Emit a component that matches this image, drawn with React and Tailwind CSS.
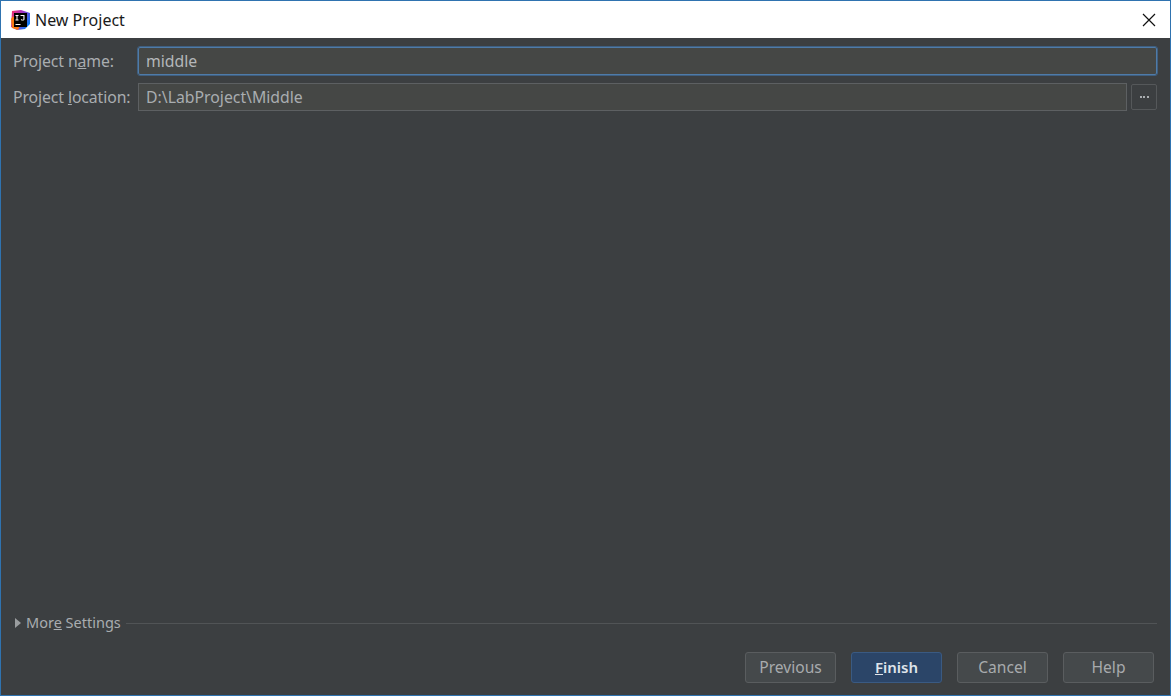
import React from 'react';

const FONT = "font-['Noto_Sans','Open_Sans',sans-serif]";

const AppIcon = () => (
  <svg width="20" height="20" viewBox="0 0 20 20">
    <defs>
      <linearGradient id="ij" x1="0" y1="0" x2="1" y2="0.6">
        <stop offset="0" stopColor="#fe315d" />
        <stop offset="0.5" stopColor="#a032c8" />
        <stop offset="1" stopColor="#087cfa" />
      </linearGradient>
    </defs>
    <path d="M2 1 L11 0 L20 3 L20 14 L15 19 L7 20 L1 17 Z" fill="url(#ij)" />
    <path d="M1 9 L2 18 L8 20 L10 16 L3 6 Z" fill="#f97a12" />
    <rect x="4" y="3" width="13" height="14" fill="#000" />
    <rect x="5.5" y="14" width="5" height="1" fill="#fff" />
    <path d="M5.5 5 h3 v.9 h-1 v3.6 h1 v.9 h-3 v-.9 h1 v-3.6 h-1 Z" fill="#fff" />
    <path d="M10.5 5 h4 v4 c0 1.1 -.7 1.6 -1.9 1.6 c-.8 0 -1.4 -.3 -1.8 -.9 l.7 -.6 c.3 .4 .6 .6 1 .6 c.5 0 .9 -.2 .9 -.8 v-3 h-2.9 Z" fill="#fff" />
  </svg>
);

const Btn = ({ children, primary }) => (
  <button
    className={`w-[91px] h-[31px] rounded-[3px] border leading-none ${
      primary
        ? 'bg-[#2b4568] border-[#3a5a82] text-[#dfe4ea] font-semibold text-[15px]'
        : 'bg-[#45494b] border-[#5a5d5f] text-[#a8abad] text-[15.6px]'
    }`}
  >
    {children}
  </button>
);

const Label = ({ children }) => (
  <span className="w-[125px] shrink-0 pt-[2px] text-[15.8px] tracking-[-0.1px] text-[#a9adb0] whitespace-nowrap">{children}</span>
);

export default function App() {
  return (
    <div className={`w-[1171px] h-[696px] flex flex-col bg-[#3c3f41] border border-[#2f73b0] ${FONT}`}>
      {/* title bar */}
      <div className="h-[37px] shrink-0 bg-white flex items-center pl-[9px] pr-[14px]">
        <AppIcon />
        <span className="ml-[5px] text-[16px] text-[#1a1a1a]">New Project</span>
        <svg className="ml-auto" width="14" height="14" viewBox="0 0 14 14">
          <path d="M1 1 L13 13 M13 1 L1 13" stroke="#111" strokeWidth="1.2" fill="none" />
        </svg>
      </div>

      <div className="flex-1 flex flex-col pl-[12px] pr-[13px]">
        <div className="flex items-center mt-[9px] h-[28px]">
          <Label>Project n<span className="underline">a</span>me:</Label>
          <div className="flex-1 h-[28px] flex items-center pt-[2px] px-[7px] bg-[#454745] border border-[#4f7ba8] rounded-[2px] outline outline-1 outline-[#3f5f80] text-[15.8px] text-[#b4b7b9]">
            middle
          </div>
        </div>
        <div className="flex items-center mt-[8px] h-[28px]">
          <Label>Project <span className="underline">l</span>ocation:</Label>
          <div className="flex-1 h-[28px] flex items-center pt-[2px] px-[7px] bg-[#454745] border border-[#5d6062] text-[15.8px] text-[#a9adb0]">
            {'D:\\LabProject\\Middle'}
          </div>
          <div className="w-[26px] h-[26px] ml-[4px] flex items-center justify-center gap-[1.5px] bg-[#3c3f41] border border-[#55585a] rounded-[2px]">
            <i className="w-[2px] h-[2px] bg-[#a9adb0]" />
            <i className="w-[2px] h-[2px] bg-[#a9adb0]" />
            <i className="w-[2px] h-[2px] bg-[#a9adb0]" />
          </div>
        </div>

        <div className="flex-1" />

        <div className="flex items-center h-[20px] mb-[19px]">
          <svg width="7" height="10" viewBox="0 0 7 10" className="mr-[5px] ml-[1px]">
            <path d="M1 0 L7 5 L1 10 Z" fill="#9a9d9f" />
          </svg>
          <span className="text-[14.5px] text-[#a9adb0] whitespace-nowrap">Mor<span className="underline">e</span> Settings</span>
          <div className="flex-1 h-px bg-[#515456] ml-[5px]" />
        </div>

        <div className="flex justify-end gap-[15px] mb-[12px] pr-[3px]">
          <Btn>Previous</Btn>
          <Btn primary><span className="underline">F</span>inish</Btn>
          <Btn>Cancel</Btn>
          <Btn>Help</Btn>
        </div>
      </div>
    </div>
  );
}
